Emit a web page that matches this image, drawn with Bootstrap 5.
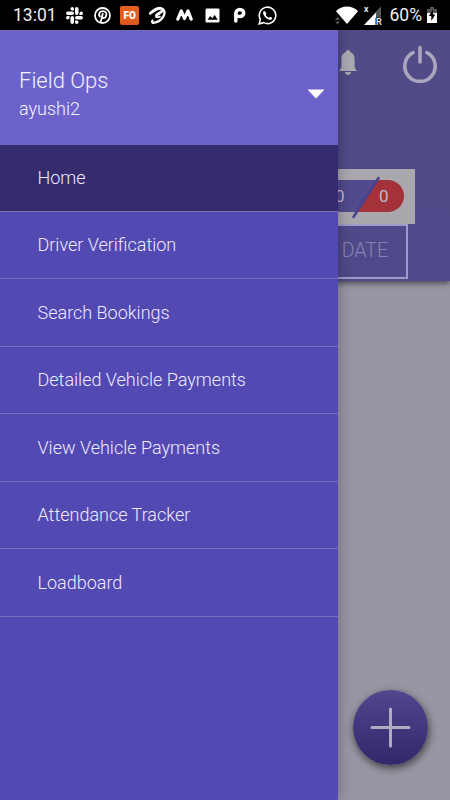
<!DOCTYPE html>
<html lang="en">
<head>
<meta charset="utf-8">
<meta name="viewport" content="width=device-width, initial-scale=1">
<title>Field Ops</title>
<link href="https://cdn.jsdelivr.net/npm/bootstrap@5.3.0/dist/css/bootstrap.min.css" rel="stylesheet">
<style>
body{font-family:Roboto,"Liberation Sans",sans-serif;background:#9896a3;height:800px;width:450px}
svg{display:block;flex:none}
.statusbar{height:30px;background:#000;font-size:17.5px;padding:0 12px 0 13px;line-height:32px;color:#eee}
.clock{width:48px;flex:none;white-space:nowrap}
.slot{width:27.5px;flex:none}
.fo-tile{width:19px;height:19px;background:#e65e1b;border-radius:2px;font:900 10px/20px Roboto,sans-serif}
.screen{height:770px}
.hero{height:251px;background:linear-gradient(#514b86,#50498a);box-shadow:0 2px 6px rgba(0,0,0,.55)}
.tools{height:139px;padding:11px 12px 0 0}
.bell{margin:8px 44px 0 0}
.counts{width:205px;height:55px;background:#aaa8ae;margin-right:35px;padding-right:11px}
.date-btn{width:190px;height:55px;margin-right:42px;padding-right:18px;border:2px solid #a09bc4;color:#8983b5;font-size:19.5px;font-weight:300;line-height:50px}
.drawer{width:338px;background:#5349b2;box-shadow:1px 0 12px rgba(0,0,0,.28);overflow:hidden}
.account{height:115px;background:#6c63ca;padding:12px 13px 0 19px;color:#f3f1fc;font-weight:300;border-top:1px solid #746cb4}
.account-name{font-size:22px;line-height:29px}
.account-user{font-size:18px;line-height:28px}
.menu .list-group-item{height:67.5px;background:transparent;color:#edeaff;border-color:#786fbd;border-width:0 0 1px;padding:0 0 0 37.5px;font-size:18px;font-weight:300}
.menu .list-group-item:last-child{border-bottom-width:1px}
.menu .list-group-item.active{height:66.5px;background:#352c70;margin:0;border-color:#7871b0}
.fab{right:22px;bottom:35px;width:75px;height:75px;background:linear-gradient(#51478e,#32276a);box-shadow:1px 3px 8px rgba(0,0,0,.6)}
</style>
</head>
<body class="overflow-hidden">
<div class="statusbar d-flex align-items-center">
  <span class="clock">13:01</span>
  <span class="slot d-flex justify-content-center"><svg width="17" height="17" viewBox="0 0 24 24" fill="#fff"><path d="M5 15.200a2.500 2.500 0 1 1-2.500-2.500H5zM6.300 15.200a2.500 2.500 0 0 1 5 0v6.300a2.500 2.500 0 0 1-5 0zM8.800 5a2.500 2.500 0 1 1 2.500-2.500V5zM8.800 6.300a2.500 2.500 0 0 1 0 5H2.500a2.500 2.500 0 0 1 0-5zM19 8.800a2.500 2.500 0 1 1 2.500 2.500H19zM17.700 8.800a2.500 2.500 0 0 1-5 0V2.500a2.500 2.500 0 0 1 5 0zM15.200 19a2.500 2.500 0 1 1-2.500 2.500V19zM15.200 17.700a2.500 2.500 0 0 1 0-5h6.300a2.500 2.500 0 0 1 0 5z"/></svg></span>
  <span class="slot d-flex justify-content-center"><svg width="17" height="17" viewBox="0 0 24 24" fill="none" stroke="#fff" stroke-linecap="round"><circle cx="12" cy="12" r="10.600" stroke-width="2.500"/><path d="M8.200 13.500C5.500 9 8.500 5.800 12.500 5.800c4 0 5.800 3 4.800 6.200-1 4-4.500 4.300-5.600 2.200M12.300 9.500L9.500 21" stroke-width="2.600"/></svg></span>
  <span class="slot d-flex justify-content-center"><span class="fo-tile text-white text-center">FO</span></span>
  <span class="slot d-flex justify-content-center"><svg width="19" height="19" viewBox="0 0 19 19" fill="none" stroke="#fff" stroke-linecap="round" stroke-linejoin="round"><path d="M2.300 7.300C5.500 4.500 9.500 2 12.800 2.300c2.200.2 2.300 1.800.9 3.300C12.300 7 9.500 7.700 8.500 9.300" stroke-width="2.800"/><path d="M15.300 3.500c2 2 1.300 5.500-.8 8.200-2.300 3-5.800 4.900-9.500 5" stroke-width="2.400"/><path d="M8.500 9.500c-1.300 2 1.200 2.400 3.300 1M5 16.700c-1.300-.2-1.300-1.500-.5-2.300" stroke-width="2"/></svg></span>
  <span class="slot d-flex justify-content-center"><svg width="19" height="14" viewBox="0 0 19 14"><path d="M2.800 11.200L6.300 3l3.100 7.500L13 3l3.200 8.200" fill="none" stroke="#fff" stroke-width="3.200" stroke-linejoin="round" stroke-linecap="round"/></svg></span>
  <span class="slot d-flex justify-content-center"><svg width="15" height="15" viewBox="0 0 15 15"><rect x=".5" y=".5" width="14" height="14" rx="1.300" fill="#fff"/><path d="M2.500 11.800L5.300 8l1.900 2.300L9.700 7l3 4.800z" fill="#000"/></svg></span>
  <span class="slot d-flex justify-content-center"><svg width="13" height="16" viewBox="0 0 13 16"><path d="M2.800 14V6.500a4 4 0 0 1 4-4c5.200 0 5.200 7 0 7-1.200 0-2-.2-2.500-.6" fill="none" stroke="#fff" stroke-width="3.500" stroke-linecap="round"/></svg></span>
  <span class="slot d-flex justify-content-center"><svg width="19" height="19" viewBox="0 0 24 24" fill="none" stroke="#fff" stroke-width="2"><path d="M1.500 22.500l1.500-5.600A10.400 10.400 0 1 1 7.200 21z"/><path d="M8.500 6.300c-1.800 0-2.300 1.800-2 3.200.7 3.400 4.600 7.300 8.300 8 1.800.2 3.400-1 3.100-2.700l-2.700-1.300-1.200 1.400c-2-.8-3.500-2.300-4.300-4l1-1.400z" fill="#fff" stroke="none"/></svg></span>
  <svg class="ms-auto" width="48" height="24" viewBox="333 3 48 24" fill="#fff"><path d="M335 11.200a15.500 15.500 0 0 1 22 0L346 24z"/><path d="M334 20l2.500-3 2.500 3zM334 21.500h5l-2.500 3z" fill="#555"/><path d="M380 7v18h-17z" fill="#fff"/><path d="M380 7V19h-5V12.300z" fill="#555"/><path d="M374.500 17.500h7v8.500h-7z" fill="#000"/><text x="375" y="25" font-family="Roboto,sans-serif" font-size="9" font-weight="500">R</text><text x="363" y="11.500" font-family="Roboto,sans-serif" font-size="9" font-weight="500">x</text></svg>
  <span class="ms-2">60%</span>
  <svg class="ms-1" width="12" height="18" viewBox="0 0 12 18"><path d="M4 1h4v2h3v5H1V3h3z" fill="#555"/><path d="M1 7h10v10H1z" fill="#fff"/><path d="M7 3.500L2.800 10h2.500v5L9.300 8.500H7z" fill="#000"/></svg>
</div>

<div class="screen position-relative">
  <header class="hero d-flex flex-column align-items-end">
    <div class="tools d-flex justify-content-end align-items-start">
      <svg class="bell" width="20" height="28" viewBox="0 0 20 28" fill="#aaa8b0"><path d="M10 1c1.500 0 2 .8 2 1.900C15.500 4 16.600 7 16.600 10v7.500c0 1.500.8 2.500 1.900 3.700v.8h-17v-.8c1.100-1.200 1.900-2.200 1.900-3.700V10C3.400 7 4.500 4 8 2.900 8 1.800 8.500 1 10 1zM7 23h6c0 4-6 4-6 0z"/></svg>
      <svg width="36" height="42" viewBox="0 0 36 42" fill="none" stroke="#aaa6bd" stroke-width="3.600" stroke-linecap="round"><path d="M11 11.700a15.200 15.200 0 1 0 14 0M18 6.500V21"/></svg>
    </div>
    <div class="counts d-flex align-items-center justify-content-end">
      <svg width="80" height="55" viewBox="324 169 80 55"><path d="M324 196a16 16 0 0 1 16-16h37l-20 32h-17a16 16 0 0 1-16-16z" fill="#514a8c"/><path d="M378 180h10a16 16 0 0 1 0 32h-30z" fill="#a4323a"/><path d="M378.500 178L353.500 217" stroke="#49418a" stroke-width="2.600" stroke-linecap="round"/><g font-family="Roboto,sans-serif" font-size="17" fill="#c0b9cc"><text x="335" y="202">0</text><text x="379" y="202">0</text></g></svg>
    </div>
    <div class="date-btn text-end">DATE</div>
  </header>

  <button class="fab btn border-0 rounded-circle position-absolute d-flex align-items-center justify-content-center p-0" aria-label="Add"><svg width="41" height="41" viewBox="0 0 41 41"><path d="M20.500 2v37M2 20.500h37" stroke="#b0abc0" stroke-width="3" stroke-linecap="round"/></svg></button>

  <nav class="drawer position-absolute top-0 start-0 h-100">
    <div class="account d-flex justify-content-between align-items-center">
      <div>
        <div class="account-name">Field Ops</div>
        <div class="account-user">ayushi2</div>
      </div>
      <svg width="18" height="10" viewBox="0 0 18 10"><path d="M.5.500h17L9 9.500z" fill="#fff"/></svg>
    </div>
    <div class="menu list-group list-group-flush">
      <a href="#" class="list-group-item active d-flex align-items-center">Home</a>
      <a href="#" class="list-group-item d-flex align-items-center">Driver Verification</a>
      <a href="#" class="list-group-item d-flex align-items-center">Search Bookings</a>
      <a href="#" class="list-group-item d-flex align-items-center">Detailed Vehicle Payments</a>
      <a href="#" class="list-group-item d-flex align-items-center">View Vehicle Payments</a>
      <a href="#" class="list-group-item d-flex align-items-center">Attendance Tracker</a>
      <a href="#" class="list-group-item d-flex align-items-center">Loadboard</a>
    </div>
  </nav>
</div>
<script src="https://cdn.jsdelivr.net/npm/bootstrap@5.3.0/dist/js/bootstrap.bundle.min.js"></script>
</body>
</html>
